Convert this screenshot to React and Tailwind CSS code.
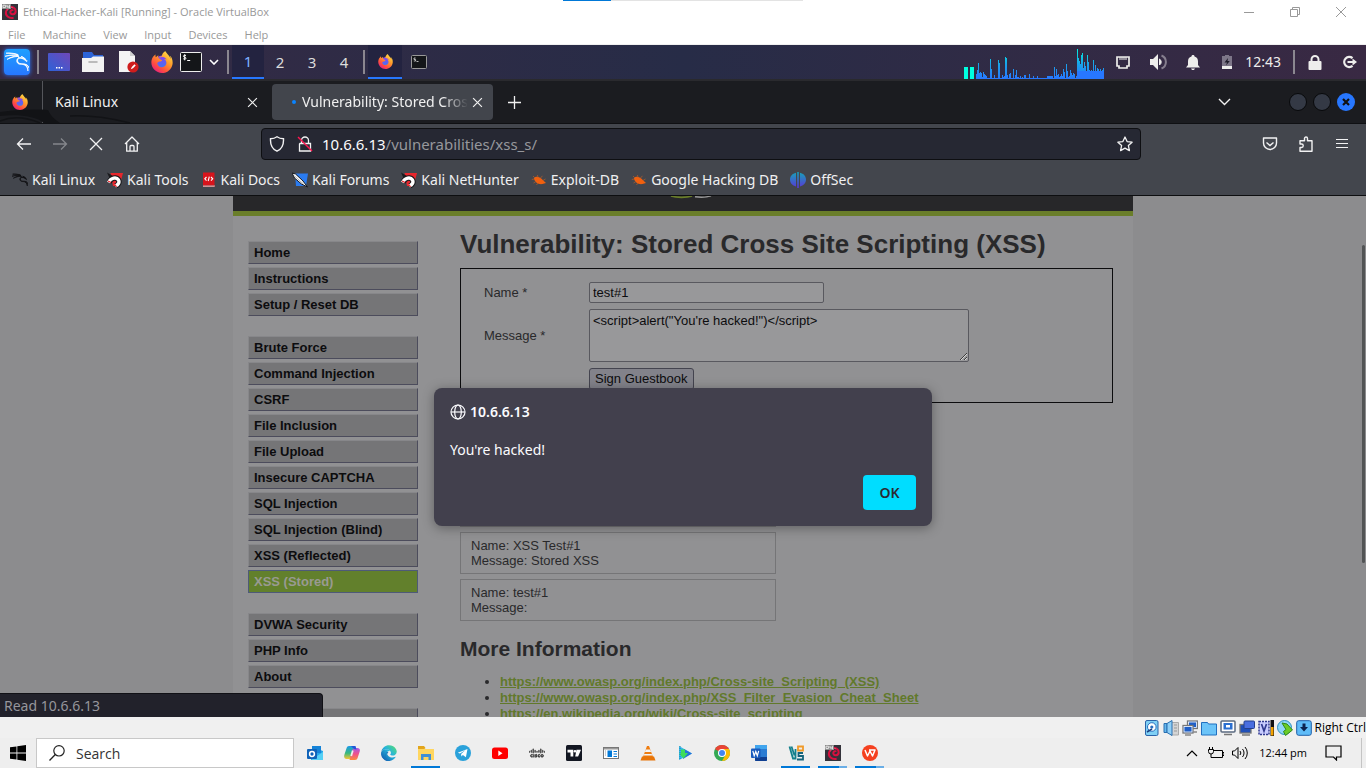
import React from "react";
import { SiKalilinux, SiCisco, SiFirefoxbrowser } from "react-icons/si";
import { FaEdge } from "react-icons/fa";

const WIN = "font-['Open_Sans','Noto_Sans',sans-serif]";
const KALI = "font-['Noto_Sans',sans-serif]";

function Firefox({ className }) {
  return (
    <svg viewBox="0 0 24 24" className={className} aria-hidden="true">
      <defs>
        <linearGradient id="ffBody" x1="0.85" y1="0.05" x2="0.2" y2="0.95">
          <stop offset="0" stopColor="#ffe04a" />
          <stop offset="0.4" stopColor="#ff9a2a" />
          <stop offset="0.75" stopColor="#ff4d40" />
          <stop offset="1" stopColor="#e6207e" />
        </linearGradient>
        <linearGradient id="ffGlobe" x1="0" y1="0" x2="0" y2="1">
          <stop offset="0" stopColor="#8a3ff0" />
          <stop offset="1" stopColor="#3b7df0" />
        </linearGradient>
      </defs>
      <circle cx="12" cy="12.5" r="7.5" fill="url(#ffGlobe)" />
      <SiFirefoxbrowser size={24} fill="url(#ffBody)" />
    </svg>
  );
}

function VmIcon({ className }) {
  return (
    <svg viewBox="0 0 16 16" className={className} aria-hidden="true">
      <rect width="16" height="16" fill="#33323a" />
      <path d="M11.6 13.8C6.5 14.8 3.2 11.4 4 7.6 4.7 4 8.6 2 11.6 3.6c3 1.7 2.7 6-.4 6.7-2.2.4-3.6-1.5-2.6-3.2.7-1.2 2-1 2.3-.3" fill="none" stroke="#d80f3f" strokeWidth="2" />
      <path d="M5.2 6.6C6 4 9 2.8 11 3.8" fill="none" stroke="#f2607f" strokeWidth=".7" />
      <rect width="9" height="5" fill="#8a8a8a" />
      <path d="M1 1.2h2.4v2.4H1zM5 1v2h2.6M7.4.8v3.6" fill="none" stroke="#eee" strokeWidth=".9" />
    </svg>
  );
}

function Magnet() {
  return (
    <svg viewBox="0 0 16 16" className="size-4" aria-hidden="true">
      <path d="M3.500 1H16l-3.500 13H6z" fill="#e8262c" />
      <path d="M0 .5l6 3.500-3.500 2z" fill="#1b1b1e" />
      <path d="M2 10.500C4 5.500 9.500 4.800 11.500 8c1.200 2.400 0 4.600-2.800 6" fill="none" stroke="#16171a" strokeWidth="5.400" />
      <path d="M1.500 10.500C4 5.500 9.500 4.800 11.500 8c1.200 2.400 0 4.600-3.200 6" fill="none" stroke="#fff" strokeWidth="3.400" />
      <path d="M1 9l3 1.500M8 12.500l1.500 2.500" stroke="#e8262c" strokeWidth="1.200" />
    </svg>
  );
}

function Bug() {
  return (
    <svg viewBox="0 0 16 16" className="size-4" aria-hidden="true">
      <path d="M3 6.2C5.2 3.6 9.2 5 12 8.2l3 2.8-3.600 1C7.600 12.800 3.200 9.800 3 6.200z" fill="#f0600f" />
      <path d="M4 6L2 4M7 5.500L6.500 3M9.500 6L11.500 3.800M5 9.500L2.500 11M7 11l-1.500 2M12 8.500L14.500 7M.8 7.500L3 7" stroke="#b05a2a" strokeWidth=".8" fill="none" />
    </svg>
  );
}

const bookmarks = [
  ["Kali Linux", <SiKalilinux strokeWidth={1} className="size-4 text-[#101114]" />],
  ["Kali Tools", <Magnet />],
  ["Kali Docs", (
    <svg viewBox="0 0 16 16" className="size-4" aria-hidden="true">
      <path d="M2 .5h11.500V15H2z" fill="#d8141c" /><path d="M2 13h11.500v2H2z" fill="#eee" /><path d="M2 13.400h11.500v1H2z" fill="#a00e14" />
      <path d="M5.500 5L3.800 6.800l1.700 1.800M10 5l1.700 1.800L10 8.600M8.300 4.600L7.200 9" stroke="#fff" fill="none" strokeWidth="1.100" />
    </svg>
  )],
  ["Kali Forums", (
    <svg viewBox="0 0 16 16" className="size-4" aria-hidden="true">
      <path d="M3 1.500h13L14 14H4z" fill="#2a7bf0" />
      <path d="M0 1l3.500 1L11 9l4.500 6-6-3L2.500 6z" fill="#fff" stroke="#17181c" strokeWidth="1" />
      <path d="M2.500 4l9 8" stroke="#777" strokeWidth=".6" />
    </svg>
  )],
  ["Kali NetHunter", <Magnet />],
  ["Exploit-DB", <Bug />],
  ["Google Hacking DB", <Bug />],
  ["OffSec", (
    <svg viewBox="0 0 16 16" className="size-4" aria-hidden="true">
      <defs><linearGradient id="os" x1="0" y1="0" x2="0" y2="1"><stop offset="0" stopColor="#16a3b8" /><stop offset="1" stopColor="#5a35d8" /></linearGradient></defs>
      <path d="M7.200 0h1.600v16H7.200zM6 .8v13.600C2.400 13.600 0 11 0 7.600S2.400 1.600 6 .8zM10 .8v13.600c3.600-.8 6-3.400 6-6.800S13.600 1.600 10 .8z" fill="url(#os)" />
    </svg>
  )],
];

const cpu = [5, 9, 16, 6, 7, 6, 2, 7, 5, 4, 3, 1, 1, 20, 10, 1, 1, 4, 1, 1, 1, 19, 16, 1, 1, 4, 2, 3, 22, 21, 4, 1, 5, 6, 1, 1, 10, 4, 9, 2, 2, 1, 3, 1, 2, 1, 4, 4, 1, 1, 0, 5, 1, 1, 1, 3, 1, 1, 1, 3, 1, 1, 1, 1, 1, 1, 1, 1, 3, 3, 3, 3, 3, 3, 1, 12, 3, 10, 4, 5, 2, 3, 5, 3, 10, 7, 15, 8, 2, 3, 9, 6, 4, 6, 5, 0, 3, 30, 21, 18, 15, 24, 26, 11, 17, 13, 6, 24, 17, 9, 9, 8, 19, 7, 14, 6, 11, 10, 7, 10, 6, 9, 11];

function CpuGraph() {
  return (
    <svg viewBox="0 0 140 30" className="w-[140px] h-[30px] self-end" aria-label="CPU graph">
      <defs><linearGradient id="cpu" gradientUnits="userSpaceOnUse" x1="0" y1="0" x2="0" y2="30"><stop offset="0" stopColor="#00f5e0" /><stop offset="0.5" stopColor="#1aa3e8" /><stop offset="1" stopColor="#2777ff" /></linearGradient></defs>
      <path d="M0 18h4v12H0zM6 18h4v12H6z" fill="#00ffe0" />
      <path fill="url(#cpu)" shapeRendering="crispEdges" d={cpu.map((v, i) => `M${12 + Math.round(i * 1.041)} 30v-${v}h1v${v}z`).join("")} />
      <path d="M12 29h128v1H12z" fill="#2777ff" />
      <path d="M113 22h27v8h-27z" fill="#2777ff" />
    </svg>
  );
}

function PanelLeft() {
  return (
    <div className="flex items-center">
      <button aria-label="Applications" className="ml-1 size-[26px] rounded-sm bg-linear-to-b from-[#1fa0ff] to-[#2777ff] shadow-[0_0_4px_#2777ff] text-white flex items-center justify-center">
        <SiKalilinux strokeWidth={0.8} className="size-6" />
      </button>
      <span className="ml-[7px] w-[2px] h-6 bg-[#8b8790]" />
      <button aria-label="Show desktop" className="ml-[9px]">
        <svg viewBox="0 0 22 18" className="w-[22px] h-[18px]"><defs><linearGradient id="dk" x1="0" y1="1" x2="1" y2="0"><stop offset="0" stopColor="#2d62d8" /><stop offset="1" stopColor="#7047b8" /></linearGradient></defs><rect width="22" height="18" rx="1" fill="url(#dk)" /><path d="M8 14h1.500v1.500H8zM10.500 14H12v1.500h-1.500zM13 14h1.500v1.500H13z" fill="#fff" /></svg>
      </button>
      <button aria-label="Files" className="ml-3">
        <svg viewBox="0 0 22 20" className="w-[22px] h-5"><path d="M1 0h9l2 3h9v6H1z" fill="#2c64d8" /><path d="M0 6h9l2-1.500h11V20H0z" fill="#f2f2f2" /><path d="M7 10h8" stroke="#a9a9a9" strokeWidth="1.500" strokeLinecap="round" /></svg>
      </button>
      <button aria-label="Text editor" className="ml-3.5">
        <svg viewBox="0 0 22 22" className="size-[22px]"><path d="M1 0h11l5 5v16H1z" fill="#f4f4f4" /><path d="M12 0v5h5z" fill="#cfcfcf" /><circle cx="15" cy="16" r="5.600" fill="#cf1d1d" /><path d="M12.800 18.200l1-2.200 2.700-2.700 1.200 1.200-2.700 2.700z" fill="#fff" /></svg>
      </button>
      <button aria-label="Firefox" className="ml-[11px]"><Firefox className="size-[22px]" /></button>
      <button aria-label="Terminal" className="ml-[7px]">
        <svg viewBox="0 0 22 20" className="w-[22px] h-5"><rect x=".5" y=".5" width="21" height="19" rx="1" fill="#141619" stroke="#eee" /><path d="M6 3.500C4.500 3 3.400 3.300 3.400 4.300c0 1.200 2.600.6 2.600 1.900 0 1.100-1.600 1.100-2.700.6M4.700 2.300v6M7.200 8.500h3" stroke="#fff" fill="none" strokeWidth="1" /></svg>
      </button>
      <button aria-label="More terminals" className="ml-[7px]">
        <svg viewBox="0 0 10 6" className="w-[10px] h-[6px]"><path d="M1 1l4 4 4-4" stroke="#fff" strokeWidth="1.600" fill="none" /></svg>
      </button>
      <span className="ml-2 mr-[3px] w-[2px] h-6 bg-[#8b8790]" />
      <div className="flex self-stretch text-[15px] text-[#dcdcdc]">
        <button className="w-8 h-[34px] bg-[#232340] border-b-2 border-[#2777ff] text-[#7fb2ff]">1</button>
        <button className="w-8">2</button>
        <button className="w-8">3</button>
        <button className="w-8">4</button>
      </div>
      <span className="ml-[3px] mr-[3px] w-[2px] h-6 bg-[#8b8790]" />
      <button aria-label="Firefox window" className="w-[34px] h-[34px] bg-[#232340] border-b-2 border-[#2777ff] flex items-center justify-center"><Firefox className="size-[15px]" /></button>
      <button aria-label="Terminal window" className="w-[34px] flex items-center justify-center">
        <svg viewBox="0 0 16 14" className="w-4 h-3.5"><rect x=".5" y=".5" width="15" height="13" rx="1" fill="#141619" stroke="#999" /><path d="M4.600 3H3v1.500h1.600V6H2.800M5.500 6.500h2" stroke="#ddd" fill="none" strokeWidth=".8" /></svg>
      </button>
    </div>
  );
}

function PanelRight() {
  return (
    <div className="flex items-center self-stretch text-[#eeeeec]">
      <CpuGraph />
      <svg viewBox="0 0 14 13" className="ml-3 w-3.5 h-[13px]"><path d="M1 1h12v9h-2v2H3v-2H1z" fill="none" stroke="currentColor" strokeWidth="1.700" /><path d="M4 1v3M6 1v3M8 1v3M10 1v3" stroke="currentColor" /></svg>
      <svg viewBox="0 0 17 16" className="ml-5 w-[17px] h-4"><path d="M0 5h3l5-5v16l-5-5H0z" fill="currentColor" /><path d="M9.500 5a3.500 3.500 0 010 6z" fill="currentColor" stroke="currentColor" /><path d="M11.500 1.500a7 7 0 010 13" fill="none" stroke="#857e8e" strokeWidth="2" /></svg>
      <svg viewBox="0 0 14 15" className="ml-[19px] w-3.5 h-[15px]"><path d="M7 0c1 0 1.500.6 1.500 1.400C11 2 12 4 12 6.500V10l2 2.500H0L2 10V6.500C2 4 3 2 5.500 1.400 5.500.6 6 0 7 0zM5 13.500h4L8 15H6z" fill="currentColor" /></svg>
      <svg viewBox="0 0 10 14" className="ml-[22px] w-[10px] h-3.5"><path d="M3 0h4v1h3v13H0V1h3z" fill="#7d7688" /><path d="M0 11h10v3H0z" fill="currentColor" /><path d="M6 3L2.500 7.500H5L4 10.500 7.800 6H5.500z" fill="#1d1b28" /></svg>
      <time className="ml-[13px] text-sm">12:43</time>
      <span className="ml-3 w-[2px] h-6 bg-[#8b8790]" />
      <svg viewBox="0 0 14 15" className="ml-[13px] w-3.5 h-[15px]"><path d="M3.500 8V4.500a3.500 3.500 0 017 0V8" fill="none" stroke="currentColor" strokeWidth="2" /><rect x="0.500" y="6" width="13" height="9" rx="1" fill="currentColor" /></svg>
      <svg viewBox="0 0 15 14" className="ml-5 mr-[9px] w-[15px] h-3.5"><path d="M10.500 3.200a5 5 0 100 7.600" fill="none" stroke="currentColor" strokeWidth="2.300" /><path d="M5.500 7H12" stroke="currentColor" strokeWidth="2" /><path d="M10.500 3.500L15 7l-4.500 3.500z" fill="currentColor" /></svg>
    </div>
  );
}

function Cross({ className }) {
  return <svg viewBox="0 0 10 10" className={className} aria-hidden="true"><path d="M1 1l8 8M9 1L1 9" stroke="currentColor" strokeWidth="1.100" fill="none" /></svg>;
}

function TabBar() {
  return (
    <div className="relative flex items-center h-[45px] shrink-0 bg-[#1b1c20] border-t-2 border-b border-t-[#2a2a2e] border-b-[#0f1013] text-[#f0f0f0]">
      <svg viewBox="0 0 140 14" className="absolute left-0 bottom-0 w-[140px] h-3.5" aria-hidden="true">
        <path d="M0 3C14 1 32 0 48 1c2 5 6 9 12 13H44C36 7 18 5 0 7z" fill="#121316" />
        <path d="M0 12c12-5 26-4 40 2M70 7c20-1 40 2 60 7" fill="none" stroke="#121316" strokeWidth="1.500" />
      </svg>
      <button aria-label="Firefox View" className="w-[43px] self-stretch border-r border-[#55565b] flex items-center pl-3"><Firefox className="size-4" /></button>
      <div className="flex items-center justify-between w-[229px] pl-3 pr-[14px]">
        <span className="text-sm">Kali Linux</span>
        <button aria-label="Close Kali Linux tab"><Cross className="size-[11px]" /></button>
      </div>
      <div className="flex items-center w-[221px] h-9 rounded bg-[#42454c] pl-5 pr-[10px]">
        <span className="size-1 shrink-0 rounded-full bg-[#0a84ff]" />
        <span className="ml-[6px] flex-1 overflow-hidden whitespace-nowrap text-sm mask-r-from-85%">Vulnerability: Stored Cross</span>
        <button aria-label="Close Vulnerability tab" className="ml-1"><Cross className="size-[11px]" /></button>
      </div>
      <button aria-label="New tab" className="ml-[15px]"><svg viewBox="0 0 13 13" className="size-[13px]"><path d="M6.500 0v13M0 6.500h13" stroke="currentColor" strokeWidth="1.300" /></svg></button>
      <div className="flex items-center ml-auto mr-[11px]">
        <button aria-label="List all tabs" className="mr-[58px]"><svg viewBox="0 0 13 8" className="w-[13px] h-2"><path d="M1 1l5.500 5.500L12 1" stroke="currentColor" strokeWidth="1.400" fill="none" /></svg></button>
        <div className="flex gap-[6px]">
          <button aria-label="Minimize" className="size-[18px] rounded-full bg-[#343945] border border-[#08090b]" />
          <button aria-label="Maximize" className="size-[18px] rounded-full bg-[#343945] border border-[#08090b]" />
          <button aria-label="Close" className="size-[18px] rounded-full bg-[#2777ff] flex items-center justify-center"><svg viewBox="0 0 8 8" className="size-2"><path d="M1 1l6 6M7 1L1 7" stroke="#111" strokeWidth="2.200" /></svg></button>
        </div>
      </div>
    </div>
  );
}

function NavBar() {
  return (
    <div className="flex items-center h-10 bg-[#43464d] text-[#f2f2f3]">
      <div className="flex items-center w-[250px] shrink-0 gap-5 pl-4">
        <button aria-label="Back"><svg viewBox="0 0 16 16" className="size-4"><path d="M15 8H1.500M7 2.500L1.500 8 7 13.500" stroke="currentColor" strokeWidth="1.300" fill="none" /></svg></button>
        <button aria-label="Forward" className="text-[#85878c]"><svg viewBox="0 0 16 16" className="size-4"><path d="M1 8h13.500M9 2.500L14.500 8 9 13.500" stroke="currentColor" strokeWidth="1.300" fill="none" /></svg></button>
        <button aria-label="Stop"><svg viewBox="0 0 16 16" className="size-4"><path d="M2 2l12 12M14 2L2 14" stroke="currentColor" strokeWidth="1.300" /></svg></button>
        <button aria-label="Home"><svg viewBox="0 0 16 16" className="size-4"><path d="M1 8l7-7 7 7M2.700 6.500v8.700h10.600V6.500M6 15v-4.500a1 1 0 011-1h2a1 1 0 011 1V15" stroke="currentColor" strokeWidth="1.300" fill="none" strokeLinejoin="round" /></svg></button>
      </div>
      <div className="flex items-center flex-1 h-8 ml-[11px] rounded bg-[#262833] border border-[#0e0f12] px-[7px]">
        <svg viewBox="0 0 16 16" className="size-4 shrink-0"><path d="M8 .8c2 1.500 4.300 2 6.500 2C14.800 8.500 13 13 8 15.200 3 13 1.200 8.500 1.500 2.800c2.200 0 4.500-.5 6.500-2z" fill="none" stroke="currentColor" strokeWidth="1.400" /></svg>
        <svg viewBox="0 0 16 16" className="ml-3 size-4 shrink-0"><path d="M4.500 7V4.500a3.500 3.500 0 017 0V7M3 7.500h10.500V15H2.500V8z" fill="none" stroke="currentColor" strokeWidth="1.300" /><path d="M1 1l14 14" stroke="#ff1450" strokeWidth="1.400" /></svg>
        <div className="ml-[9px] flex-1 text-[15px] leading-5 text-[#96979c]"><span className="text-[#fbfbfe]">10.6.6.13</span>/vulnerabilities/xss_s/</div>
        <button aria-label="Bookmark this page"><svg viewBox="0 0 16 16" className="size-4"><path d="M8 1l2.100 4.600 5 .6-3.700 3.400 1 5L8 12.100l-4.400 2.500 1-5L.9 6.200l5-.6z" fill="none" stroke="currentColor" strokeWidth="1.300" strokeLinejoin="round" /></svg></button>
      </div>
      <div className="flex items-center gap-5 ml-[121px] mr-4">
        <button aria-label="Save to Pocket"><svg viewBox="0 0 16 16" className="size-4"><path d="M1.500 2h13v5a6.500 6.500 0 01-13 0z" fill="none" stroke="currentColor" strokeWidth="1.400" strokeLinejoin="round" /><path d="M4.500 6.500L8 9.500l3.500-3" fill="none" stroke="currentColor" strokeWidth="1.400" /></svg></button>
        <button aria-label="Extensions"><svg viewBox="0 0 16 16" className="size-4"><path d="M2 15.200v-3.700h1.500a1.700 1.700 0 000-3.500H2V4.700h4.500V2.500a1.500 1.500 0 013 0v2.200H14v10.500z" fill="none" stroke="currentColor" strokeWidth="1.400" strokeLinejoin="round" /></svg></button>
        <button aria-label="Menu"><svg viewBox="0 0 16 16" className="size-4"><path d="M2 3.500h12M2 7.500h12M2 11.500h12" stroke="currentColor" strokeWidth="1.200" /></svg></button>
      </div>
    </div>
  );
}

const menu = [
  ["Home", "Instructions", "Setup / Reset DB"],
  ["Brute Force", "Command Injection", "CSRF", "File Inclusion", "File Upload", "Insecure CAPTCHA", "SQL Injection", "SQL Injection (Blind)", "XSS (Reflected)", "XSS (Stored)"],
  ["DVWA Security", "PHP Info", "About"],
];

function DvwaPage() {
  return (
    <div className="h-full w-[900px] mx-auto bg-[#919193] font-['Liberation_Sans',Arial,sans-serif] text-[13px] text-[#29292b]">
      <header className="h-5 bg-[#272729] border-b-[5px] border-[#6a7e2a]">
        <svg viewBox="0 0 60 4" className="w-[60px] h-1 mx-auto" aria-hidden="true"><path d="M18 0c5 1.800 16 1.800 21 0" fill="none" stroke="#6a7e2a" strokeWidth="1.800" /><path d="M42 .8c6 .8 12 .4 16-1" fill="none" stroke="#999" strokeWidth="1.400" /></svg>
      </header>
      <div className="flex">
        <nav className="w-[170px] ml-[15px] mt-[25px] shrink-0 flex flex-col gap-5">
          {menu.map((g) => (
            <ul key={g[0]} className="flex flex-col gap-[3px]">
              {g.map((t) => (
                <li key={t}>
                  <a href="#page" className={t === "XSS (Stored)"
                    ? "block h-[23px] leading-[21px] pl-[5px] font-bold bg-[#62802c] border border-[#4e5a78] text-[#999a92]"
                    : "block h-[23px] leading-[21px] pl-[5px] font-bold bg-[#757577] border border-t-[#87878a] border-l-[#87878a] border-r-[#4c4c5c] border-b-[#4c4c5c] text-[#0c0c0e]"}>{t}</a>
                </li>
              ))}
            </ul>
          ))}
          <span className="h-[23px] bg-[#757577] border border-t-[#87878a] border-l-[#87878a] border-r-[#4c4c5c] border-b-[#4c4c5c]" />
        </nav>
        <main className="flex-1 ml-[42px] mr-5 pt-3">
          <h1 className="text-[26px] leading-8 font-bold">Vulnerability: Stored Cross Site Scripting (XSS)</h1>
          <form className="mt-2 border border-[#0c0c0e] h-[135px] pl-[23px] pt-[13px]" onSubmit={(e) => e.preventDefault()}>
            <div className="flex items-center">
              <label htmlFor="name" className="w-[105px]">Name *</label>
              <input id="name" defaultValue="test#1" className="w-[235px] h-[21px] px-[3px] rounded-xs border border-[#59595f] bg-[#98989a] text-[#0c0c0e]" />
            </div>
            <div className="flex items-center mt-[6px]">
              <label htmlFor="msg" className="w-[105px]">Message *</label>
              <textarea id="msg" defaultValue={'<script>alert("You\'re hacked!")</script>'} className="block w-[380px] h-[53px] px-[3px] pt-[3px] leading-4 rounded-xs border border-[#59595f] bg-[#98989a] text-[#0c0c0e]" />
            </div>
            <button className="ml-[105px] mt-[6px] h-[22px] px-[5px] rounded-[3px] border border-[#44444f] bg-[#82828a] text-[#0c0c0e]">Sign Guestbook</button>
          </form>
          <div className="mt-[82px] w-[316px] flex flex-col gap-[5px] leading-[15px]">
            <div className="h-[42px] border border-[#757577]" />
            <div className="h-[42px] border border-[#757577] pl-[10px] pt-[5px]">Name: XSS Test#1<br />Message: Stored XSS</div>
            <div className="h-[42px] border border-[#757577] pl-[10px] pt-[5px]">Name: test#1<br />Message:</div>
          </div>
          <h2 className="mt-4 text-[21px] leading-6 font-bold">More Information</h2>
          <ul className="mt-[13px] pl-10 list-disc font-bold leading-4">
            <li><a href="#1" className="underline text-[#61792b]">https://www.owasp.org/index.php/Cross-site_Scripting_(XSS)</a></li>
            <li><a href="#2" className="underline text-[#61792b]">https://www.owasp.org/index.php/XSS_Filter_Evasion_Cheat_Sheet</a></li>
            <li><a href="#3" className="underline text-[#61792b]">https://en.wikipedia.org/wiki/Cross-site_scripting</a></li>
          </ul>
        </main>
      </div>
    </div>
  );
}

function AlertDialog() {
  return (
    <div role="alertdialog" aria-label="10.6.6.13" className="absolute top-48 left-1/2 -translate-x-1/2 w-[498px] h-[138px] rounded-lg bg-[#42404d] shadow-[0_2px_12px_#00000059] p-4 flex flex-col text-[#fbfbfe]">
      <div className="flex items-center gap-1 text-sm font-semibold leading-4">
        <svg viewBox="0 0 16 16" className="size-4"><g fill="none" stroke="currentColor" strokeWidth="1.200"><circle cx="8" cy="8" r="7" /><ellipse cx="8" cy="8" rx="3.300" ry="7" /><path d="M1.200 8h13.600" /></g></svg>
        10.6.6.13
      </div>
      <p className="mt-5 text-sm">You're hacked!</p>
      <button className="mt-auto self-end w-[53px] h-[35px] shrink-0 rounded bg-[#00ddff] text-[#2b2a33] text-sm font-semibold">OK</button>
    </div>
  );
}

const Box = ({ children }) => <svg viewBox="0 0 16 16" className="size-4 shrink-0" aria-hidden="true">{children}</svg>;

const statusIcons = [
  <Box><rect x="1.500" y=".5" width="12.500" height="15" rx="1.500" fill="#7fd0f5" stroke="#2b63a8" /><circle cx="7.800" cy="7" r="4.300" fill="#fff" stroke="#2a6fc0" /><circle cx="7.800" cy="7" r="1.600" fill="#2a6fc0" /><path d="M3 12l5-3" stroke="#1c3f80" strokeWidth="1.500" /></Box>,
  <Box><path d="M8 2.500h7.500V15H8z" fill="#d4d4d4" stroke="#aaa" /><path d="M1 3.500h3v9H1z" fill="#63b8ee" stroke="#2b6fb0" /><path d="M4 3.500L9 .5v15l-5-3z" fill="#8fd0f8" stroke="#2b6fb0" /><path d="M11 5h3M11 8h3M11 11h3" stroke="#999" /></Box>,
  <Box><rect x="5.500" y="1" width="10" height="7.500" fill="#1f5fc8" stroke="#777" strokeWidth="1.300" /><rect x="6.500" y="2" width="8" height="5.500" fill="none" stroke="#fff" strokeWidth=".8" /><rect x="1" y="5.500" width="10" height="7.500" fill="#1f5fc8" stroke="#777" strokeWidth="1.300" /><rect x="2" y="6.500" width="8" height="5.500" fill="none" stroke="#fff" strokeWidth=".8" /><path d="M3 15h6M11 12h4" stroke="#888" strokeWidth="1.500" fill="none" /></Box>,
  <Box><path d="M.5 2.500h6l1 1.500h8v11H.5z" fill="#6cc4f8" stroke="#2170c0" /></Box>,
  <Box><rect x="1" y="1" width="14" height="11" rx="1" fill="#fff" stroke="#5a6a80" strokeWidth="1.500" /><rect x="3.500" y="3" width="9" height="6.500" fill="#2a6fd0" /><rect x="6" y="5" width="4" height="2.500" fill="#fff" /><path d="M4 14.500h8" stroke="#777" strokeWidth="1.500" /></Box>,
  <Box><rect x="1" y="4.500" width="11" height="8.500" fill="#1f4fb8" stroke="#777" strokeWidth="1.300" /><rect x="5" y="1" width="10.500" height="7.500" rx="1" fill="#4a6fe0" stroke="#24408c" /><path d="M3 15h8" stroke="#777" strokeWidth="1.500" /></Box>,
  <Box><rect x="1" y="1.500" width="10" height="13" fill="#c8ccff" stroke="#303a90" strokeWidth="1.500" strokeDasharray="2 1" /><path d="M3.500 4L6 11l2.500-7" fill="none" stroke="#303a90" strokeWidth="1.700" /><path d="M12.500 0H16v16h-3.500z" fill="#111" /><path d="M13 7h2.500v8.500H13z" fill="#f5a300" /></Box>,
  <Box><circle cx="7.500" cy="7.500" r="7" fill="#8fd6f8" stroke="#2b8fc0" /><path d="M5 3l5 1 5.500 6-7 5.500-2-4 2.500-2z" fill="#6ccc28" stroke="#2f8a18" /></Box>,
  <Box><rect x=".7" y=".7" width="14.600" height="14.600" rx="2" fill="#5fbcf8" stroke="#1f5fa8" /><path d="M6.500 3.500h3V7H12l-4 4.500L4 7h2.500z" fill="#0c2450" /></Box>,
];

const apps = [
  ["Outlook", "", <><path d="M6 2l10 4v9H4V6z" fill="#25a6ea" /><path d="M5 1h9v7H5z" fill="#1583d8" /><path d="M4 15L16 7v8z" fill="#54d0f5" /><rect y="4" width="10" height="10" rx="1" fill="#0f62b8" /><circle cx="5" cy="9" r="2.400" fill="none" stroke="#fff" strokeWidth="1.500" /></>],
  ["Copilot", "", <><defs><linearGradient id="cp1" x1="0" y1="0" x2="0" y2="1"><stop stopColor="#1b98ea" /><stop offset=".55" stopColor="#38b87c" /><stop offset="1" stopColor="#f7c531" /></linearGradient><linearGradient id="cp2" x1="0" y1="0" x2="0" y2="1"><stop stopColor="#a65ae8" /><stop offset=".5" stopColor="#f0508a" /><stop offset="1" stopColor="#fb8a3c" /></linearGradient></defs><path d="M5 1h6L8 12c-.4 1.300-1 2-2.500 2H2.500C.5 14-.3 12 .3 10L2.600 3C3 1.700 3.700 1 5 1z" fill="url(#cp1)" /><path d="M11 15H5.500L8.400 5c.4-1.300 1-2 2.600-2h2.500c2 0 2.800 1.500 2.200 3.500L13.600 13c-.4 1.300-1.100 2-2.600 2z" fill="url(#cp2)" /><path d="M7 1h4.500L12.500 4.500 10 4z" fill="#2156d8" /><path d="M8.800 5.500L7.200 11" stroke="#eee" strokeWidth="1.800" /></>],
  ["Edge", "", <><defs><linearGradient id="ed" x1="1" y1="0" x2="0" y2="1"><stop stopColor="#5be06a" /><stop offset=".45" stopColor="#26b5dc" /><stop offset="1" stopColor="#0c50a8" /></linearGradient></defs><path d="M1 6a7 7 0 009 9.500C6 14 4.500 10 7.500 7z" fill="#1467b8" /><FaEdge size={16} fill="url(#ed)" /></>],
  ["File Explorer", "full", <><path d="M0 2h6l1.500 2H16v11H0z" fill="#ffd660" /><path d="M0 1h6l1.500 2-1.500 1H0z" fill="#e2a51c" /><path d="M3 9h10v6h-2.500v-3h-5v3H3z" fill="#3f8fd8" /></>],
  ["Telegram", "", <><circle cx="8" cy="8" r="8" fill="#2aa1da" /><path d="M2.800 7.800l9.700-3.900-1.600 8.400-3-2.200-1.500 1.500-.3-2.700 4.200-3.700-5.400 3.400z" fill="#fff" /></>],
  ["YouTube", "", <><rect y="2.500" width="16" height="11.500" rx="2.500" fill="#f00" /><path d="M6.300 5.500l4.200 2.700-4.200 2.700z" fill="#fff" /></>],
  ["Cisco", "", <SiCisco size={16} fill="#333" strokeWidth={0.8} stroke="#333" />],
  ["TradingView", "", <><rect width="16" height="16" rx="1.500" fill="#131722" /><path d="M1.500 4.800h5.800v6.700H4.500v-4h-3zM10.500 4.800H15l-2.900 6.700H9.200z" fill="#fff" /><circle cx="9" cy="6.200" r="1.300" fill="#fff" /></>],
  ["News", "", <><rect x=".5" y="2.500" width="15" height="11" fill="#fff" stroke="#777" /><path d="M1 3h14v1.500H1z" fill="#999" /><path d="M2 6h1M2 8h1M2 10h1" stroke="#999" /><rect x="4.500" y="5.500" width="4.500" height="6.500" fill="#0078d7" /><path d="M10.500 6.500H14M10.500 9H14M10.500 11.500H14" stroke="#0078d7" /></>],
  ["VLC", "", <><path d="M7 1h2l4 11H3z" fill="#ef7d10" /><path d="M5.800 4.500h4.400l.9 2.500H4.900zM4.300 9h7.400l.5 1.500H3.800z" fill="#f4f4f4" /><path d="M2 11.500h12l1.500 4H.5z" fill="#e87508" /></>],
  ["Media Player", "", <><path d="M2 1l13 7.500L2 15z" fill="#35b3f0" /><path d="M7 4l8 4.500L6 14z" fill="#2374d8" /><path d="M4 4.500h4V8h3l-4.500 5.500L2 8.500h2z" fill="#3ddc5a" /><path d="M3 1v14" stroke="#1b8f9c" strokeDasharray="1 1" /></>],
  ["Chrome", "", <><circle cx="8" cy="8" r="8" fill="#34a853" /><path d="M8 8L1.070 4A8 8 0 0114.930 4z" fill="#ea4335" /><path d="M8 4h6.930A8 8 0 018 16l3.500-6z" fill="#fbbc05" /><path d="M1.070 4h6.930v4z" fill="#ea4335" /><circle cx="8" cy="8" r="4" fill="#fff" /><circle cx="8" cy="8" r="3" fill="#4285f4" /></>],
  ["Word", "", <><rect x="4" width="12" height="16" rx="1" fill="#2b7cd3" /><path d="M4 1a1 1 0 011-1h10a1 1 0 011 1v3H4z" fill="#41a5ee" /><path d="M4 12h12v3a1 1 0 01-1 1H5a1 1 0 01-1-1z" fill="#103f91" /><rect y="3.500" width="9.500" height="9.500" rx="1" fill="#185abd" /><path d="M1.800 5.800l1.400 5L4.800 6.500l1.500 4.300 1.400-5" fill="none" stroke="#fff" strokeWidth="1.200" /></>],
  ["VirtualBox", "full", <><path d="M1.500 1.500L5 13.500h2.500V4M3.500 1.500l3 9" fill="none" stroke="#14808c" strokeWidth="1.800" /><path d="M10 1.500h5v4h-5z" fill="none" stroke="#f09a28" strokeWidth="1.800" /><path d="M15 8h-4.500v3H15v3.500H9" fill="none" stroke="#14647c" strokeWidth="1.800" /></>],
  ["Ethical-Hacker-Kali", "part", <VmIcon />],
  ["WPS Office", "part", <><circle cx="8" cy="8" r="8" fill="#f5401f" /><path d="M3 5l2.500 6L8 6l2.500 5L13 5H7" fill="none" stroke="#fff" strokeWidth="1.500" strokeLinejoin="round" /></>],
];

function Taskbar() {
  return (
    <footer className={`flex h-[30px] shrink-0 bg-[#eeeeee] ${WIN}`}>
      <button aria-label="Start" className="w-9 flex items-center justify-center"><svg viewBox="0 0 16 16" className="size-4"><path d="M0 2.300l6.500-.9v6.200H0zM7.300 1.300L16 0v7.600H7.300zM0 8.400h6.500v6.200L0 13.700zM7.300 8.400H16V16l-8.700-1.200z" fill="#000" /></svg></button>
      <label className="flex items-center w-[258px] bg-white border border-[#c8c8c8] pl-3">
        <svg viewBox="0 0 16 16" className="size-4"><circle cx="10" cy="5.800" r="5.200" fill="none" stroke="#222" strokeWidth="1.200" /><path d="M6.300 9.500L.5 15.500" stroke="#222" strokeWidth="1.300" /></svg>
        <input aria-label="Search" placeholder="Search" className="ml-[11px] w-40 pt-px outline-none text-sm placeholder:text-[#333]" />
      </label>
      <div className="flex ml-[2px]">
        {apps.map(([name, run, art]) => (
          <button key={name} aria-label={name} className="relative w-[37px] flex items-center justify-center">
            <svg viewBox="0 0 16 16" className="size-4">{art}</svg>
            {run === "full" && <span className="absolute bottom-0 inset-x-1 h-[2px] bg-[#0078d7]" />}
            {run === "part" && <span className="absolute bottom-0 inset-x-1 h-[2px] bg-[#0078d7] border-r-8 border-[#6aaee6]" />}
          </button>
        ))}
      </div>
      <div className="flex items-center ml-auto text-black">
        <svg viewBox="0 0 12 7" className="w-3 h-[7px]"><path d="M1 6l5-5 5 5" stroke="currentColor" strokeWidth="1.200" fill="none" /></svg>
        <svg viewBox="0 0 16 12" className="ml-[10px] w-4 h-3"><path d="M6 3.500h8.500v7H4.500M14.500 5.500H16v3h-1.500M.5 2.500h5v2a2.500 2.500 0 01-5 0zM1.500 0v2.500M4.500 0v2.500M3 7v3.500h2" stroke="currentColor" fill="none" /></svg>
        <svg viewBox="0 0 17 14" className="ml-2 w-[17px] h-3.5"><path d="M.5 5h2l3.500-3.500v11L2.500 9h-2z" stroke="currentColor" fill="none" /><path d="M8 5a3 3 0 010 4M10.500 3a6 6 0 010 8M13 1a9 9 0 010 12" stroke="currentColor" fill="none" /></svg>
        <time className="ml-[10px] text-[11px] whitespace-nowrap">12:44 pm</time>
        <svg viewBox="0 0 17 16" className="ml-[18px] w-[17px] h-4"><path d="M1 1h15v11h-4.500v3l-3-3H1z" stroke="currentColor" strokeWidth="1.200" fill="none" /></svg>
        <span className="ml-[19px] mr-1 w-px h-[30px] bg-[#c4c4c4]" />
      </div>
    </footer>
  );
}

export default function App() {
  return (
    <div className="relative h-screen flex flex-col overflow-hidden bg-white">
      <div className="absolute top-0 left-1/2 -translate-x-1/2 flex w-[240px] h-px bg-[#e3e3e3]"><span className="w-12 bg-[#0078d7]" /></div>
      <div className={`flex items-center h-6 shrink-0 pl-[2px] pr-5 text-[#999] ${WIN}`}>
        <VmIcon className="size-4" />
        <span className="ml-[5px] text-[11px]">Ethical-Hacker-Kali [Running] - Oracle VirtualBox</span>
        <div className="flex items-center ml-auto gap-9">
          <button aria-label="Minimize window"><svg viewBox="0 0 10 10" className="size-[10px]"><path d="M0 5.500h10" stroke="currentColor" /></svg></button>
          <button aria-label="Restore window"><svg viewBox="0 0 10 10" className="size-[10px]"><path d="M.5 2.500h7v7h-7zM2.500 2.500v-2h7v7h-2" stroke="currentColor" fill="none" /></svg></button>
          <button aria-label="Close window"><svg viewBox="0 0 10 10" className="size-[10px]"><path d="M0 0l10 10M10 0L0 10" stroke="currentColor" /></svg></button>
        </div>
      </div>
      <nav className={`flex items-center h-[21px] shrink-0 pl-2 pt-[2px] gap-[17px] border-b border-[#f0f0f0] text-[11px] text-[#999] ${WIN}`}>
        {["File", "Machine", "View", "Input", "Devices", "Help"].map((m) => <button key={m}>{m}</button>)}
      </nav>
      <section className={`flex-1 min-h-0 flex flex-col ${KALI}`}>
        <div className="flex items-center justify-between h-[34px] shrink-0 bg-linear-to-r from-[#362a44] via-[#272c47] to-[#392943]">
          <PanelLeft />
          <PanelRight />
        </div>
        <TabBar />
        <NavBar />
        <div className="flex items-center h-8 shrink-0 pl-3 gap-3 bg-[#43464d] border-b border-[#0d0e10] text-sm text-[#f0f0f1]">
          {bookmarks.map(([t, icon]) => <a key={t} href="#bookmark" className="flex items-center gap-1 whitespace-nowrap">{icon}{t}</a>)}
        </div>
        <div className="relative flex-1 min-h-0 overflow-hidden bg-[#8c8c8e]">
          <DvwaPage />
          <AlertDialog />
          <div className="absolute right-px top-[49px] w-[3px] h-[318px] rounded-full bg-[#525455]" />
          <div className="absolute left-0 bottom-0 w-[323px] h-6 rounded-tr bg-[#22222b] border-t border-r border-[#111116] pl-1 text-sm leading-6 text-[#96969c]">Read 10.6.6.13</div>
        </div>
      </section>
      <div className={`flex items-center justify-end h-[21px] shrink-0 gap-[3px] bg-[#f0f0f0] text-xs text-black ${WIN}`}>
        {statusIcons.map((ic, i) => <React.Fragment key={i}>{ic}</React.Fragment>)}
        <span className="pt-px whitespace-nowrap">Right Ctrl</span>
      </div>
      <Taskbar />
    </div>
  );
}
